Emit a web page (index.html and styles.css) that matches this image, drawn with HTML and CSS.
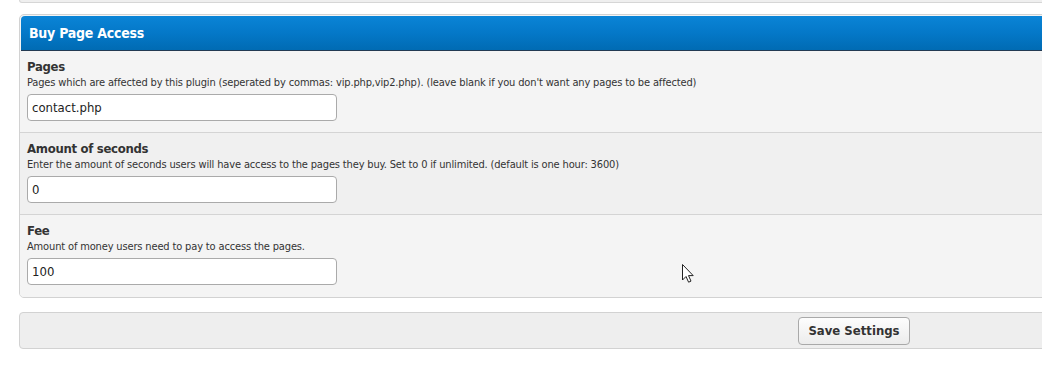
FILE: index.html
```html
<!DOCTYPE html>
<html>
<head>
<meta charset="utf-8">
<link rel="stylesheet" href="styles.css">
</head>
<body>
<div class="wrap">
  <div class="prev-panel"></div>
  <div class="panel">
    <div class="panel-head">Buy Page Access</div>
    <div class="row">
      <div class="label">Pages</div>
      <div class="desc">Pages which are affected by this plugin (seperated by commas: vip.php,vip2.php). (leave blank if you don't want any pages to be affected)</div>
      <input class="field" type="text" value="contact.php">
    </div>
    <div class="row alt">
      <div class="label">Amount of seconds</div>
      <div class="desc">Enter the amount of seconds users will have access to the pages they buy. Set to 0 if unlimited. (default is one hour: 3600)</div>
      <input class="field" type="text" value="0">
    </div>
    <div class="row last">
      <div class="label">Fee</div>
      <div class="desc">Amount of money users need to pay to access the pages.</div>
      <input class="field" type="text" value="100">
    </div>
  </div>
  <div class="footer">
    <button class="save" type="button">Save Settings</button>
  </div>
</div>
<svg class="cursor" width="14" height="22" viewBox="0 0 14 22">
  <path d="M1.5 1.5 L1.5 17 L5 13.5 L7.6 19.2 L10 18.1 L7.5 12.6 L12.2 12.6 Z" fill="#fff" stroke="#222" stroke-width="1" stroke-linejoin="miter"/>
</svg>
</body>
</html>
```
FILE: styles.css
```css
html, body {
  margin: 0;
  padding: 0;
  background: #ffffff;
}
body {
  font-family: "DejaVu Sans Condensed", "DejaVu Sans", sans-serif;
  color: #333;
  width: 1042px;
  height: 376px;
  overflow: hidden;
  position: relative;
}
.wrap {
  margin-left: 19px;
  width: 1060px;
}
.prev-panel {
  height: 2px;
  border: 1px solid #d6d6d6;
  border-top: none;
  border-radius: 0 0 4px 4px;
  background: #efefef;
  margin-bottom: 11px;
}
.panel {
  border: 1px solid #d2d2d2;
  border-radius: 5px;
  background: #f4f4f4;
  overflow: hidden;
}
.panel-head {
  height: 34px;
  line-height: 35px;
  margin: 1px 1px 0 1px;
  border-radius: 4px 4px 0 0;
  padding-left: 8px;
  color: #fff;
  font-weight: bold;
  font-size: 14px;
  letter-spacing: -0.25px;
  background: linear-gradient(#0a84d6 0%, #0478c8 50%, #006bb3 100%);
  border-bottom: 1px solid #233a52;
}
.row {
  padding: 7px 7px 11px 7px;
  border-bottom: 1px solid #d4d4d4;
  background: #f4f4f4;
}
.row.alt {
  background: #f0f0f0;
}
.row.last {
  border-bottom: none;
  padding-bottom: 12px;
}
.label {
  font-weight: bold;
  font-size: 13px;
  line-height: 17px;
  letter-spacing: -0.3px;
  color: #333;
}
.desc {
  font-size: 11px;
  line-height: 15px;
  letter-spacing: -0.15px;
  color: #333;
}
.field {
  display: block;
  box-sizing: border-box;
  margin-top: 4px;
  width: 310px;
  height: 27px;
  border: 1px solid #aaaaaa;
  border-radius: 4px;
  background: #fff;
  padding: 0 4px;
  font-family: "DejaVu Sans Condensed", "DejaVu Sans", sans-serif;
  font-size: 13px;
  color: #222;
  outline: none;
}
.footer {
  margin-top: 14px;
  height: 35px;
  border: 1px solid #d2d2d2;
  border-radius: 4px;
  background: #eeeeee;
  display: flex;
  align-items: center;
  padding-left: 778px;
}
.save {
  width: 112px;
  height: 28px;
  border: 1px solid #a9a9a9;
  border-radius: 4px;
  background: linear-gradient(#fdfdfd, #ececec);
  font-family: "DejaVu Sans Condensed", "DejaVu Sans", sans-serif;
  font-weight: bold;
  font-size: 13px;
  color: #333;
  padding: 0;
}
.cursor {
  position: absolute;
  left: 681px;
  top: 263px;
}
```
